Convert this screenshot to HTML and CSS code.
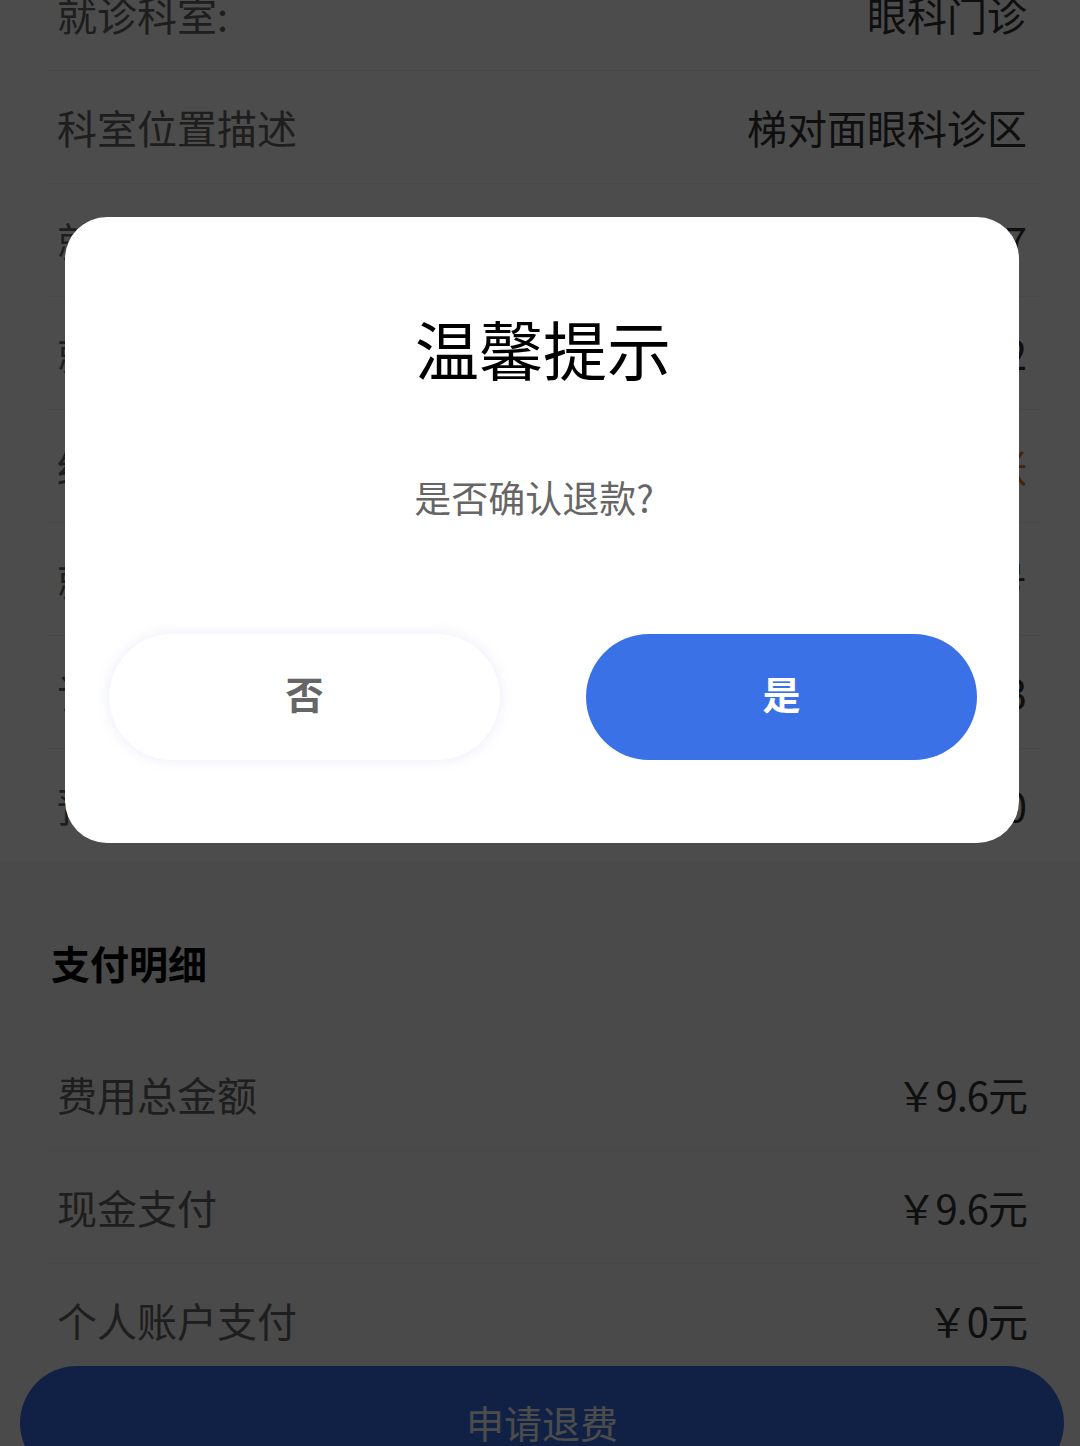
FILE: index.html
```html
<!DOCTYPE html>
<html lang="zh-CN">
<head>
    <meta charset="UTF-8">
    <meta name="viewport" content="width=device-width, initial-scale=1.0">
    <title>订单详情</title>
    <link rel="stylesheet" href="styles.css">
</head>
<body>
    <!-- visit info card (scrolled a little) -->
    <div class="info-card">
        <div class="row">
            <span class="label">就诊科室:</span>
            <span class="value">眼科门诊</span>
        </div>
        <div class="row">
            <span class="label">科室位置描述</span>
            <span class="value"><span class="masked">门诊楼二楼电</span>梯对面眼科诊区</span>
        </div>
        <div class="row">
            <span class="label">就诊日期</span>
            <span class="value">2024-05-17</span>
        </div>
        <div class="row">
            <span class="label">就诊时段</span>
            <span class="value">10:30-11:02</span>
        </div>
        <div class="row">
            <span class="label">结算状态</span>
            <span class="value warn">已开张</span>
        </div>
        <div class="row">
            <span class="label">就诊序号</span>
            <span class="value">第12号</span>
        </div>
        <div class="row">
            <span class="label">订单号</span>
            <span class="value">2024051710233</span>
        </div>
        <div class="row">
            <span class="label">预约渠道</span>
            <span class="value">0</span>
        </div>
    </div>

    <div class="pay-section">
        <h2 class="section-title">支付明细</h2>
        <div class="row">
            <span class="label">费用总金额</span>
            <span class="value money">￥9.6元</span>
        </div>
        <div class="row">
            <span class="label">现金支付</span>
            <span class="value money">￥9.6元</span>
        </div>
        <div class="row">
            <span class="label">个人账户支付</span>
            <span class="value money">￥0元</span>
        </div>
        <button class="refund-btn">申请退费</button>
    </div>

    <!-- confirm dialog -->
    <div class="mask">
        <div class="dialog">
            <div class="dialog-title">温馨提示</div>
            <div class="dialog-msg">是否确认退款?</div>
            <div class="dialog-actions">
                <button class="btn btn-no">否</button>
                <button class="btn btn-yes">是</button>
            </div>
        </div>
    </div>
</body>
</html>
```

FILE: styles.css
```css
body {
    margin: 0;
    height: 1446px;
    overflow: hidden;
    font-family: "Noto Sans CJK SC", "Noto Sans", sans-serif;
    background-color: #f7f7f7;
}
.info-card {
    background-color: #fff;
    margin-top: -42px;
    padding: 0 40px 0 48px;
}
.row {
    height: 112px;
    display: flex;
    align-items: center;
    justify-content: space-between;
    padding: 0 13px 0 9px;
    border-bottom: 1px solid #eee;
    font-size: 40px;
    line-height: 1;
}
.info-card .row:last-child {
    border-bottom: none;
}
.label {
    color: #666;
}
.value {
    color: #333;
}
.value.money {
    letter-spacing: -1px;
}
.value.warn {
    color: #f26b2a;
}
.masked {
    color: transparent;
}
.pay-section {
    padding: 0 40px 0 48px;
}
.section-title {
    margin: 0;
    padding: 81px 0 56px 3px;
    font-size: 39px;
    line-height: 40px;
    font-weight: 700;
    color: #000;
}
.pay-section .row:last-of-type {
    border-bottom: none;
}
.refund-btn {
    display: block;
    width: 1044px;
    height: 114px;
    margin: -10px 0 0 -28px;
    padding-bottom: 4px;
    border: none;
    border-radius: 57px;
    background-color: #3b71e6;
    color: #fff;
    font-family: inherit;
    font-size: 38px;
}
.mask {
    position: fixed;
    left: 0;
    top: 0;
    right: 0;
    bottom: 0;
    background-color: rgba(0, 0, 0, 0.7);
}
.dialog {
    position: absolute;
    left: 65px;
    top: 217px;
    width: 954px;
    height: 626px;
    box-sizing: border-box;
    padding: 98px 42px 0 44px;
    background-color: #fff;
    border-radius: 42px;
    display: flex;
    flex-direction: column;
    align-items: center;
}
.dialog-title {
    font-size: 64px;
    line-height: 64px;
    font-weight: 400;
    color: #000;
}
.dialog-msg {
    margin-top: 100px;
    padding-right: 18px;
    font-size: 37px;
    line-height: 37px;
    color: #666;
}
.dialog-actions {
    margin-top: 118px;
    width: 100%;
    display: flex;
    justify-content: space-between;
}
.btn {
    width: 391px;
    height: 126px;
    padding: 0 0 10px;
    border: none;
    border-radius: 63px;
    font-family: inherit;
    font-size: 38px;
    font-weight: 700;
}
.btn-no {
    background-color: #fff;
    color: #666;
    box-shadow: 0 0 14px rgba(140, 150, 220, 0.18);
}
.btn-yes {
    background-color: #3b71e6;
    color: #fff;
}
```
